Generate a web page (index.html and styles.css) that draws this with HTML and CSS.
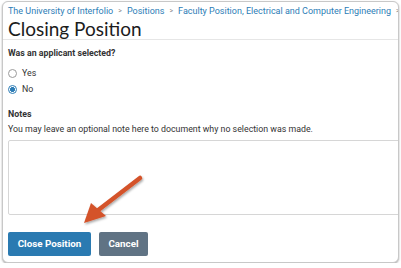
FILE: index.html
```html
<!DOCTYPE html>
<html lang="en">

<head>
    <meta charset="UTF-8">
    <meta name="viewport" content="width=device-width, initial-scale=1.0">
    <title>Closing Position</title>
    <link rel="stylesheet" href="styles.css">
</head>

<body>
    <div id="frame">
        <div id="header">
            <ul id="crumbs">
                <li><a href="#">The University of Interfolio</a></li>
                <li class="sep">&gt;</li>
                <li><a href="#">Positions</a></li>
                <li class="sep">&gt;</li>
                <li><a href="#">Faculty Position, Electrical and Computer Engineering</a></li>
                <li class="sep">&gt;</li>
            </ul>
            <h1>Closing Position</h1>
        </div>

        <div id="form">
            <p class="label">Was an applicant selected?</p>
            <div class="radio">
                <span class="dot"></span>
                <span>Yes</span>
            </div>
            <div class="radio">
                <span class="dot dot-checked"></span>
                <span>No</span>
            </div>

            <p class="label notes-label">Notes</p>
            <p class="hint">You may leave an optional note here to document why no selection was made.</p>
            <div id="notes"></div>

            <div id="buttons">
                <span class="btn btn-primary">Close Position</span>
                <span class="btn btn-cancel">Cancel</span>
            </div>
        </div>

        <!-- callout arrow -->
        <svg id="arrow" width="70" height="60" viewBox="0 0 70 60">
            <defs>
                <filter id="shadow" x="-20%" y="-20%" width="140%" height="140%">
                    <feDropShadow dx="1" dy="1.5" stdDeviation="1" flood-color="#000" flood-opacity="0.35"/>
                </filter>
            </defs>
            <g filter="url(#shadow)">
                <line x1="63" y1="7" x2="20" y2="40" stroke="#d4532b" stroke-width="4.5" stroke-linecap="round"/>
                <polygon points="7,52 14,32 29,45" fill="#d4532b"/>
            </g>
        </svg>
    </div>
</body>

</html>
```

FILE: styles.css
```css
* {
    margin: 0;
    padding: 0;
    box-sizing: border-box;
}

body {
    background: #fff;
    font-family: Roboto, "Liberation Sans", Arial, sans-serif;
    color: #333;
}

#frame {
    position: relative;
    width: 397px;
    height: 262px;
    margin: 1px 0 0 2px;
    border: 1px solid #c8c8c8;
    border-radius: 6px;
    box-shadow: 0 1px 2px rgba(0, 0, 0, 0.35);
    background: #fff;
    overflow: hidden;
}

#header {
    padding: 4px 0 0 5px;
    border-bottom: 1px solid #e6e6e6;
    height: 38px;
}

#crumbs {
    display: flex;
    align-items: center;
    gap: 5px;
    white-space: nowrap;
    font-size: 9px;
    line-height: 11px;
}

#crumbs li {
    list-style: none;
}

#crumbs a {
    color: #2d7db6;
    text-decoration: none;
}

#crumbs .sep {
    color: #888;
    font-size: 7px;
}

h1 {
    font-family: Lato, Roboto, sans-serif;
    font-weight: 400;
    font-size: 19px;
    line-height: 20px;
    margin-top: 2px;
    color: #1c1c1c;
}

#form {
    padding: 8px 0 0 5px;
    font-size: 8.8px;
}

.label {
    font-weight: bold;
    color: #333;
    line-height: 11px;
}

.radio {
    display: flex;
    align-items: center;
    gap: 5px;
    line-height: 11px;
    margin-top: 5px;
    color: #333;
}

.radio:first-of-type {
    margin-top: 9px;
}

.dot {
    width: 9px;
    height: 9px;
    border-radius: 50%;
    border: 1px solid #9a9a9a;
    background: #fff;
}

.dot-checked {
    border: 1.5px solid #2d7db6;
    background: radial-gradient(circle, #2d7db6 0 2.2px, #fff 2.7px);
}

.notes-label {
    margin-top: 14px;
}

.hint {
    margin-top: 4px;
    line-height: 11px;
    color: #333;
}

#notes {
    margin-top: 5px;
    height: 75px;
    width: 400px;
    border: 1px solid #d6d6d6;
    border-radius: 2px;
}

#buttons {
    display: flex;
    gap: 8px;
    margin-top: 17px;
}

.btn {
    height: 24px;
    line-height: 24px;
    border-radius: 2px;
    color: #fff;
    font-weight: bold;
    font-size: 9.8px;
    text-align: center;
}

.btn-primary {
    background: #2a7ab1;
    width: 83px;
}

.btn-cancel {
    background: #607384;
    width: 49px;
}

#arrow {
    position: absolute;
    left: 74px;
    top: 169px;
}
```
